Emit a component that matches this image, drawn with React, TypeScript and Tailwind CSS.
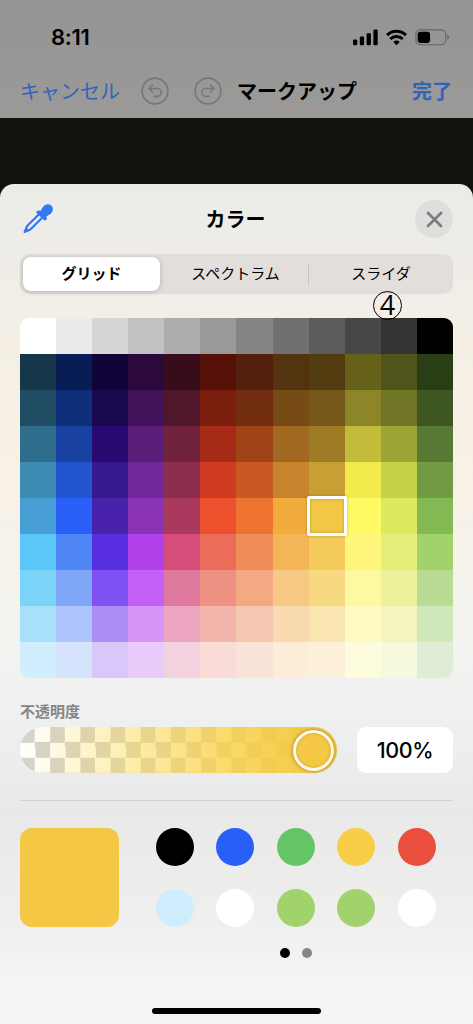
import clsx from "clsx";

const palette: string[][] = [
  ["#ffffff", "#ebebeb", "#d6d6d6", "#c2c2c2", "#adadad", "#999999", "#858585", "#707070", "#5c5c5c", "#474747", "#333333", "#000000"],
  ["#16374a", "#081c56", "#110438", "#2c093c", "#390c1b", "#551107", "#54200b", "#54330f", "#533d10", "#65611a", "#4f551a", "#2a3e16"],
  ["#204d63", "#0f2e7a", "#190a4f", "#42125a", "#501629", "#7b1e0e", "#722c10", "#774b15", "#755719", "#8c8629", "#707625", "#3d5622"],
  ["#2f6d8c", "#1941a1", "#280a73", "#5a1e7a", "#70223e", "#a62b16", "#a04317", "#a06820", "#9e7b25", "#c2bc3a", "#9ca433", "#567a33"],
  ["#3d8ab2", "#2355d0", "#36188f", "#702898", "#8d2e50", "#d03a20", "#c95923", "#c8842c", "#c89f34", "#f2eb4c", "#c5d146", "#709b42"],
  ["#489fd5", "#285ff6", "#4822ab", "#8a33b3", "#a93a5e", "#ec502d", "#ed732e", "#f2ac3e", "#f3c846", "#fefb64", "#dceb5e", "#83b953"],
  ["#5bc6f8", "#4f87f6", "#592fe2", "#b041eb", "#d64c7a", "#ed6c59", "#f08d58", "#f4b557", "#f4cb5a", "#fef67c", "#e5ee79", "#a1d26c"],
  ["#7bd3f8", "#7fa6f8", "#7f50f4", "#c45ff7", "#df789d", "#ef9182", "#f3aa83", "#f6c883", "#f7d980", "#fef8a0", "#ebf19b", "#b9dc94"],
  ["#a6e0fa", "#adc5fa", "#ab8df6", "#d795f9", "#eba5c1", "#f4b5ac", "#f5c7b0", "#f9dab0", "#fae5b0", "#fefac0", "#f3f5bd", "#d1e8ba"],
  ["#d0eefd", "#d6e3fd", "#d8c8fa", "#e8cbfb", "#f3d2df", "#f9dbd7", "#fae4d9", "#fcedd8", "#fcf1d8", "#fefcdf", "#f7f9df", "#e1ecd6"],
];

const savedColors = [
  "#000000", "#285ff6", "#65c466", "#f7ce46", "#ea4e3e",
  "#d0edfd", "#ffffff", "#a1d26c", "#a1d26c", "#ffffff",
];

const tabs = ["グリッド", "スペクトラム", "スライダ"];

const SELECTED = { row: 5, col: 8 };

const StatusIcons = () => (
  <div className="flex items-center">
    <svg width="25" height="17" viewBox="0 0 25 17">
      <rect x="0" y="10.5" width="4.3" height="5.7" rx="1.2" />
      <rect x="6.8" y="7.6" width="4.3" height="8.6" rx="1.2" />
      <rect x="13.6" y="4.2" width="4.3" height="12" rx="1.2" />
      <rect x="20.4" y="0.6" width="4.3" height="15.6" rx="1.2" />
    </svg>
    <svg className="ml-2" width="21" height="17" viewBox="0 0 21 17">
      <g fill="none" stroke="#000" strokeWidth="3">
        <path d="M1 6.1 A13.6 13.6 0 0 1 20 6.1" />
        <path d="M4.3 10 A8.8 8.8 0 0 1 16.7 10" />
      </g>
      <path d="M10.5 16.2 L7.3 13 A4.8 4.8 0 0 1 13.7 13 Z" />
    </svg>
    <svg className="ml-2" width="36" height="17" viewBox="0 0 36 17">
      <rect x="0.9" y="0.9" width="29.8" height="14.8" rx="4.4" fill="none" stroke="#666" strokeWidth="1.1" />
      <rect x="2.7" y="2.7" width="12.4" height="11.2" rx="2.8" />
      <path d="M32.3 5.8 C34.4 6.8 34.4 9.8 32.3 10.8 Z" fill="#666" />
    </svg>
  </div>
);

const UndoIcon = ({ flipped }: { flipped?: boolean }) => (
  <svg
    className={clsx(flipped && "-scale-x-100")}
    width="28"
    height="28"
    viewBox="0 0 28 28"
    fill="none"
    stroke="#777"
    strokeWidth="1.6"
    strokeLinecap="round"
    strokeLinejoin="round"
  >
    <circle cx="14" cy="14" r="12.9" />
    <path d="M11.6 8 L8.1 11.5 L11.6 15" />
    <path d="M8.4 11.5 H16.3 A3.9 3.9 0 0 1 16.3 19.4 H13.2" />
  </svg>
);

const Eyedropper = () => (
  <svg width="32" height="32" viewBox="0 0 32 32" fill="#3478f6">
    <path
      d="M17.2 11 L5.4 22.8 C4.3 24 4 26 2.6 28.9 C5.4 27.6 7.4 27.3 8.6 26.2 L20.6 14.3"
      fill="none"
      stroke="#3478f6"
      strokeWidth="2.2"
      strokeLinejoin="round"
    />
    <path d="M2 29.8 L4 24.6 L7.6 27.4 Z" />
    <path d="M14.7 8.2 C15.8 7.1 17.3 7.2 18.4 8 L20.8 4.2 C22.8 1.2 26.6 0.3 29.2 2.5 C31.8 4.9 31.3 8.7 28.4 10.9 L24.3 13.5 C25.1 14.6 25.1 16 24.1 17 C23.2 17.9 22.1 17.4 21.4 16.7 L15.1 10.6 C14.4 9.9 14 8.9 14.7 8.2 Z" />
  </svg>
);

const NavBar = () => (
  <header className="h-[118px] bg-gradient-to-b from-[#949494] to-[#9b9a99]">
    <div className="flex h-[75px] items-center justify-between pr-[22px] pl-[51px]">
      <span className="font-['Inter',sans-serif] text-[22px] font-semibold tracking-[-0.3px]">8:11</span>
      <StatusIcons />
    </div>
    <div className="flex h-8 items-center pl-[20px] text-[20px] leading-none">
      <button className="w-[100px] text-left whitespace-nowrap text-[#3163bd]">キャンセル</button>
      <div className="ml-[21px] flex gap-[25px]">
        <UndoIcon />
        <UndoIcon flipped />
      </div>
      <h1 className="ml-[15px] w-[120px] font-bold whitespace-nowrap">マークアップ</h1>
      <button className="ml-[55px] font-bold text-[#3163bd]">完了</button>
    </div>
  </header>
);

const Tabs = () => (
  <div className="relative z-10 flex h-10 rounded-[10px] bg-[#e1dedb] p-[3px] text-[15px]">
    {tabs.map((tab, index) => (
      <button
        key={tab}
        className={clsx(
          "flex items-center justify-center pb-px",
          index === 0 && "w-[137px] rounded-[8px] bg-white font-bold shadow-[0_1px_5px_rgba(0,0,0,0.2)]",
          index === 1 && "w-[150px] pl-px",
          index === 2 && "relative flex-1 pl-[2px] before:absolute before:top-[6px] before:left-[-2px] before:h-[23px] before:w-px before:bg-[#c9c6c4]"
        )}
      >
        {tab}
      </button>
    ))}
    <span
      className="absolute top-[37px] left-[353px] flex size-[29px] items-center justify-center rounded-full border border-black pb-[3px] font-['Open_Sans',sans-serif] text-[27px] leading-none"
      aria-label="④"
    >
      4
    </span>
  </div>
);

const ColorGrid = () => (
  <div className="mt-6 grid h-[360px] grid-cols-12 grid-rows-10">
    {palette.map((row, r) =>
      row.map((color, c) => (
        <div
          key={`${r}-${c}`}
          className={clsx(
            "relative",
            r === 0 && c === 0 && "rounded-tl-[9px]",
            r === 0 && c === 11 && "rounded-tr-[9px]",
            r === 9 && c === 0 && "rounded-bl-[9px]",
            r === 9 && c === 11 && "rounded-br-[9px]"
          )}
          style={{ backgroundColor: color }}
        >
          {r === SELECTED.row && c === SELECTED.col && (
            <div className="absolute -inset-[2px] z-10 rounded-[2px] border-3 border-white shadow-[0_0_3px_rgba(0,0,0,0.25),inset_0_0_3px_rgba(0,0,0,0.25)]" />
          )}
        </div>
      ))
    )}
  </div>
);

const Opacity = () => (
  <section className="mt-[24px]">
    <h3 className="h-[25px] text-[15px] leading-[17px] font-bold text-[#868686]">不透明度</h3>
    <div className="flex h-[46px] justify-between">
      <div className="flex w-[317px] items-center justify-end rounded-full bg-[linear-gradient(to_right,rgba(255,228,100,0),rgba(252,218,80,0.48)_35%,rgba(249,209,70,0.8)_65%,#f4c844_92%),repeating-conic-gradient(#fff_0_25%,#d2d2d0_0_50%)] bg-[size:100%_100%,30.2px_30.8px] pr-[3px]">
        <div className="size-[41px] rounded-full border-[3px] border-[#fcf8e8] bg-[#f4c844] shadow-[0_0_3px_1px_rgba(110,80,0,0.4),inset_0_0_3px_rgba(110,80,0,0.35)]" />
      </div>
      <div className="flex w-24 items-center justify-center rounded-[9px] bg-white pt-px font-['Inter',sans-serif] text-[21.5px] font-medium tracking-[-0.4px]">
        100%
      </div>
    </div>
  </section>
);

const Saved = () => (
  <section className="mt-[27px] flex border-t border-[#d3d3d3] pt-[27px]">
    <div className="size-[99px] rounded-[12px] bg-[#f4c844]" />
    <div className="ml-[36.5px]">
      <div className="grid grid-cols-5 gap-x-[22.5px] gap-y-[22.5px]">
        {savedColors.map((color, index) => (
          <div key={index} className="size-[38px] rounded-full" style={{ backgroundColor: color }} />
        ))}
      </div>
      <div className="mt-[21px] flex justify-center gap-3">
        <span className="size-[10px] rounded-full bg-black" />
        <span className="size-[10px] rounded-full bg-[#868686]" />
      </div>
    </div>
  </section>
);

const App = () => {
  return (
    <div className="flex h-[1024px] w-[473px] flex-col overflow-hidden bg-[#10120c] font-['Noto_Sans_CJK_JP',sans-serif] text-black">
      <NavBar />
      <main className="mt-[66px] flex flex-1 flex-col rounded-t-[14px] bg-[linear-gradient(to_bottom,#ebece8_0%,#eeece8_8%,#f3eee6_15%,#f8f1e5_34%,#f3f3f0_55%,#eff0f0_63%,#e9e9e9_75%,#eeeeed_86%,#f4f4f2_95%,#f4f4f2_100%)] px-5">
        <div className="flex h-[70px] items-center justify-between">
          <div className="w-[36px] pl-[2px]">
            <Eyedropper />
          </div>
          <h2 className="text-[20px] font-bold">カラー</h2>
          <button className="flex size-[38px] items-center justify-center rounded-full bg-[#dededd]" aria-label="閉じる">
            <svg width="17" height="17" viewBox="0 0 17 17" stroke="#7d7d7d" strokeWidth="2.8" strokeLinecap="round">
              <path d="M2 2 L15 15 M15 2 L2 15" />
            </svg>
          </button>
        </div>
        <Tabs />
        <ColorGrid />
        <Opacity />
        <Saved />
        <div className="mt-auto mb-[10px] h-[6px] w-[169px] self-center rounded-full bg-black" />
      </main>
    </div>
  );
};

export default App;
